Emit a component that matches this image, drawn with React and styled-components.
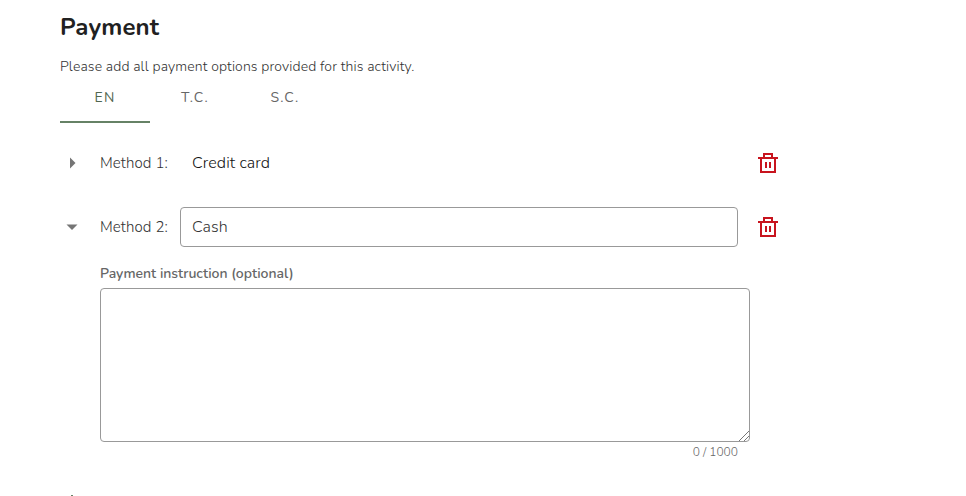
import { useState } from "react";
import styled, { createGlobalStyle } from "styled-components";

const GlobalStyle = createGlobalStyle`
  body {
    margin: 0;
    background: #fff;
    overflow: hidden;
    font-family: Nunito, Lato, sans-serif;
  }
`;

const Section = styled.section`
  box-sizing: border-box;
  width: 780px;
  height: 496px;
  padding: 12px 0 0 60px;
  overflow: hidden;
`;

const Title = styled.h2`
  margin: 0;
  font-size: 24px;
  font-weight: 700;
  line-height: 30px;
  letter-spacing: 0.15px;
  color: #212121;
`;

const Description = styled.p`
  margin: 15px 0 0;
  font-size: 14px;
  font-weight: 350;
  line-height: 20px;
  letter-spacing: 0.12px;
  color: #333;
`;

const Tabs = styled.div`
  display: flex;
  height: 48px;
  margin-top: -2px;
`;

const Tab = styled.button`
  box-sizing: border-box;
  width: 90px;
  padding: 0 0 2px;
  border: 0;
  border-bottom: 2px solid ${({ $active }) => ($active ? "#668266" : "transparent")};
  background: none;
  font: inherit;
  font-size: 14px;
  letter-spacing: 1.25px;
  color: ${({ $active }) => ($active ? "#4f664f" : "#666")};
`;

const MethodRow = styled.div`
  display: flex;
  align-items: center;
  height: 40px;
  margin-top: ${({ $first }) => ($first ? "20px" : "24px")};
`;

const IconButton = styled.button`
  display: flex;
  flex-shrink: 0;
  width: 24px;
  height: 24px;
  padding: 0;
  border: 0;
  background: none;
  color: ${({ $danger }) => ($danger ? "#c8141e" : "#757575")};
`;

const MethodLabel = styled.span`
  width: 80px;
  margin-left: 16px;
  font-size: 15px;
  font-weight: 300;
  letter-spacing: 0.1px;
  white-space: nowrap;
  color: #333;
`;

const MethodName = styled.span`
  box-sizing: border-box;
  width: 558px;
  margin-right: 18px;
  padding-left: 12px;
  font-size: 16px;
  font-weight: 300;
  letter-spacing: 0.1px;
  color: #111;
`;

const MethodInput = styled.input`
  box-sizing: border-box;
  width: 558px;
  height: 40px;
  margin: 0 18px 0 0;
  padding: 0 11px;
  border: 1px solid #999;
  border-radius: 4px;
  outline: 0;
  font: inherit;
  font-size: 16px;
  font-weight: 300;
  letter-spacing: 0.1px;
  color: #333;
`;

const Instruction = styled.div`
  display: flex;
  flex-direction: column;
  width: 650px;
  margin: 17px 0 0 40px;
`;

const InstructionLabel = styled.label`
  font-size: 14px;
  font-weight: 600;
  line-height: 20px;
  color: #666;
`;

const InstructionField = styled.textarea`
  box-sizing: border-box;
  width: 650px;
  height: 154px;
  margin: 4px 0 0;
  padding: 10px 11px;
  border: 1px solid #999;
  border-radius: 4px;
  outline: 0;
  font: inherit;
  font-size: 16px;

  &::-webkit-resizer {
    background: linear-gradient(
      135deg,
      transparent 65%,
      #777 65% 69%,
      transparent 69% 82%,
      #777 82% 86%,
      transparent 86%
    );
  }
`;

const Counter = styled.span`
  align-self: flex-end;
  margin-right: 12px;
  font-size: 12px;
  font-weight: 300;
  line-height: 20px;
  color: #666;
`;

const AddButton = styled(IconButton)`
  margin-top: 28px;
  color: #668266;
`;

const ArrowIcon = ({ open }) => (
  <svg width="24" height="24" viewBox="0 0 24 24" fill="currentColor">
    <path d={open ? "M6.5 9.5h11L12 15z" : "M10 6.5v11l5.5-5.5z"} />
  </svg>
);

const TrashIcon = () => (
  <svg width="24" height="24" viewBox="0 0 24 24" fill="none" stroke="currentColor" strokeWidth="2">
    <path d="M2 7h20M8 7V3h8v4M5 7v14h14V7M10 11v6M14 11v6" />
  </svg>
);

const PlusIcon = () => (
  <svg width="24" height="24" viewBox="0 0 24 24" fill="currentColor">
    <path d="M11 5h2v6h6v2h-6v6h-2v-6H5v-2h6z" />
  </svg>
);

const languages = ["EN", "T.C.", "S.C."];

const App = () => {
  const [language, setLanguage] = useState("EN");
  const [method, setMethod] = useState("Cash");
  const [instruction, setInstruction] = useState("");

  return (
    <>
      <GlobalStyle />
      <Section>
        <Title>Payment</Title>
        <Description>Please add all payment options provided for this activity.</Description>
        <Tabs>
          {languages.map((name) => (
            <Tab key={name} $active={name === language} onClick={() => setLanguage(name)}>
              {name}
            </Tab>
          ))}
        </Tabs>
        <MethodRow $first>
          <IconButton><ArrowIcon /></IconButton>
          <MethodLabel>Method 1:</MethodLabel>
          <MethodName>Credit card</MethodName>
          <IconButton $danger><TrashIcon /></IconButton>
        </MethodRow>
        <MethodRow>
          <IconButton><ArrowIcon open /></IconButton>
          <MethodLabel>Method 2:</MethodLabel>
          <MethodInput value={method} onChange={(e) => setMethod(e.target.value)} />
          <IconButton $danger><TrashIcon /></IconButton>
        </MethodRow>
        <Instruction>
          <InstructionLabel htmlFor="instruction">Payment instruction (optional)</InstructionLabel>
          <InstructionField
            id="instruction"
            maxLength={1000}
            value={instruction}
            onChange={(e) => setInstruction(e.target.value)}
          />
          <Counter>{instruction.length} / 1000</Counter>
        </Instruction>
        <AddButton><PlusIcon /></AddButton>
      </Section>
    </>
  );
};

export default App;
